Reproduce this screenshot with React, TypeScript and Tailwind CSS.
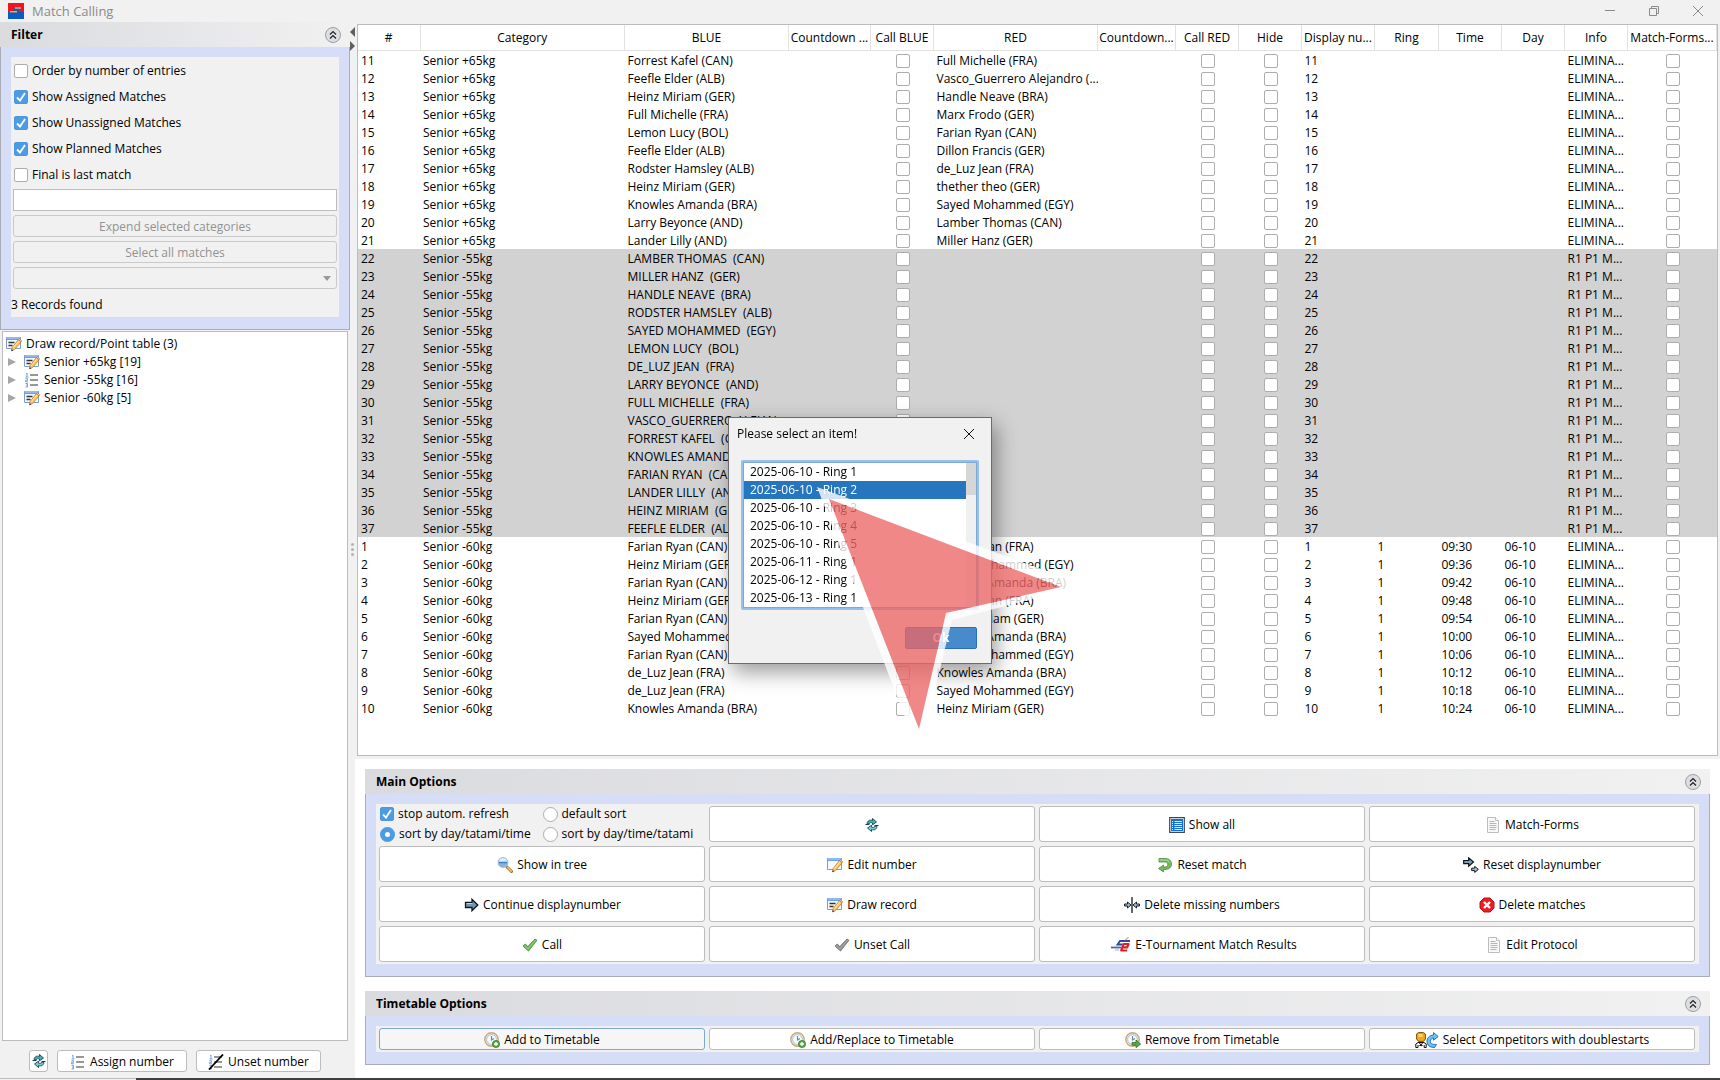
import type { ReactNode } from 'react'

type Match = {
      no: number
      category: string
      blue: string
      red?: string
      ring?: string
      time?: string
      day?: string
      info: string
}

const pairs65: [string, string][] = [
      ['Forrest Kafel (CAN)', 'Full Michelle (FRA)'],
      ['Feefle Elder (ALB)', 'Vasco_Guerrero Alejandro (...'],
      ['Heinz Miriam (GER)', 'Handle Neave (BRA)'],
      ['Full Michelle (FRA)', 'Marx Frodo (GER)'],
      ['Lemon Lucy (BOL)', 'Farian Ryan (CAN)'],
      ['Feefle Elder (ALB)', 'Dillon Francis (GER)'],
      ['Rodster Hamsley (ALB)', 'de_Luz Jean (FRA)'],
      ['Heinz Miriam (GER)', 'thether theo (GER)'],
      ['Knowles Amanda (BRA)', 'Sayed Mohammed (EGY)'],
      ['Larry Beyonce (AND)', 'Lamber Thomas (CAN)'],
      ['Lander Lilly (AND)', 'Miller Hanz (GER)'],
]

const names55 = [
      'LAMBER THOMAS  (CAN)',
      'MILLER HANZ  (GER)',
      'HANDLE NEAVE  (BRA)',
      'RODSTER HAMSLEY  (ALB)',
      'SAYED MOHAMMED  (EGY)',
      'LEMON LUCY  (BOL)',
      'DE_LUZ JEAN  (FRA)',
      'LARRY BEYONCE  (AND)',
      'FULL MICHELLE  (FRA)',
      'VASCO_GUERRERO ALEJAN...',
      'FORREST KAFEL  (CAN)',
      'KNOWLES AMANDA  (BRA)',
      'FARIAN RYAN  (CAN)',
      'LANDER LILLY  (AND)',
      'HEINZ MIRIAM  (GER)',
      'FEEFLE ELDER  (ALB)',
]

const pairs60: [string, string, string][] = [
      ['Farian Ryan (CAN)', 'de_Luz Jean (FRA)', '09:30'],
      ['Heinz Miriam (GER)', 'Sayed Mohammed (EGY)', '09:36'],
      ['Farian Ryan (CAN)', 'Knowles Amanda (BRA)', '09:42'],
      ['Heinz Miriam (GER)', 'de_Luz Jean (FRA)', '09:48'],
      ['Farian Ryan (CAN)', 'Heinz Miriam (GER)', '09:54'],
      ['Sayed Mohammed (EGY)', 'Knowles Amanda (BRA)', '10:00'],
      ['Farian Ryan (CAN)', 'Sayed Mohammed (EGY)', '10:06'],
      ['de_Luz Jean (FRA)', 'Knowles Amanda (BRA)', '10:12'],
      ['de_Luz Jean (FRA)', 'Sayed Mohammed (EGY)', '10:18'],
      ['Knowles Amanda (BRA)', 'Heinz Miriam (GER)', '10:24'],
]

const matches: Match[] = [
      ...pairs65.map(([blue, red], i) => ({ no: 11 + i, category: 'Senior +65kg', blue, red, info: 'ELIMINA...' })),
      ...names55.map((blue, i) => ({ no: 22 + i, category: 'Senior -55kg', blue, info: 'R1 P1 M...' })),
      ...pairs60.map(([blue, red, time], i) => ({
            no: 1 + i,
            category: 'Senior -60kg',
            blue,
            red,
            ring: '1',
            time,
            day: '06-10',
            info: 'ELIMINA...',
      })),
]

const columns = [
      { label: '#', width: 'w-[62px]' },
      { label: 'Category', width: '' },
      { label: 'BLUE', width: 'w-[164px]' },
      { label: 'Countdown ...', width: 'w-[82px]' },
      { label: 'Call BLUE', width: 'w-[63px]' },
      { label: 'RED', width: 'w-[164px]' },
      { label: 'Countdown...', width: 'w-[78px]' },
      { label: 'Call RED', width: 'w-[63px]' },
      { label: 'Hide', width: 'w-[63px]' },
      { label: 'Display nu...', width: 'w-[73px]' },
      { label: 'Ring', width: 'w-[64px]' },
      { label: 'Time', width: 'w-[63px]' },
      { label: 'Day', width: 'w-[63px]' },
      { label: 'Info', width: 'w-[63px]' },
      { label: 'Match-Forms...', width: 'w-[89px]' },
]

const rings = [
      '2025-06-10 - Ring 1',
      '2025-06-10 - Ring 2',
      '2025-06-10 - Ring 3',
      '2025-06-10 - Ring 4',
      '2025-06-10 - Ring 5',
      '2025-06-11 - Ring 1',
      '2025-06-12 - Ring 1',
      '2025-06-13 - Ring 1',
]

/* ---------- icons ---------- */

const Icon = ({ children, wide }: { children: ReactNode; wide?: boolean }) => (
      <svg
            viewBox={wide ? '0 0 24 16' : '0 0 16 16'}
            className={wide ? 'h-4 w-6 shrink-0' : 'h-4 w-4 shrink-0'}
            fill="none"
            aria-hidden="true"
      >
            {children}
      </svg>
)

const Pencil = () => (
      <>
            <path d="M12.5 3.5 15 6l-6.500 7.500-3 1.500.5-3.300z" fill="#fbc766" stroke="#b97a2c" strokeWidth=".8" />
            <path d="m12.500 3.500 1-1 2.200 2.200L15 6z" fill="#f4b5a0" stroke="#b97a2c" strokeWidth=".6" />
            <path d="m5.500 15 .3-2 1.500 1.400z" fill="#4a3520" />
            <path d="m12.800 5-5.500 6.500" stroke="#ffe7b5" />
      </>
)

const EditIcon = ({ lines }: { lines?: boolean }) => (
      <Icon>
            <path d="M.5 1.500h14v11H.5z" fill="#f4f8ff" stroke="#7f9cc9" />
            <path d="M.5 1h14v3H.5z" fill="#6d9fe3" />
            <path d="M1 2h13" stroke="#b8d4fa" />
            {lines && <path d="M2.500 6.500h6M2.500 9.500h4" stroke="#333" strokeWidth="1.500" />}
            <Pencil />
      </Icon>
)

const NumberListIcon = ({ struck }: { struck?: boolean }) => (
      <Icon>
            <path
                  d="M2 2l1-.8V5M1.500 5h3M1.500 6.700h2v1.600h-2v1.500h2.500M1.500 11.500h2V15h-2M2 13.200h1.500"
                  stroke="#6fa5dc"
            />
            <path d="M6 3h8M6 8h8M6 13h8" stroke="#333" strokeWidth="1.200" />
            {struck && <path d="M1 15.500 15 .5" stroke="#000" strokeWidth="1.800" />}
      </Icon>
)

const RefreshIcon = () => (
      <Icon>
            <path d="M3 6.500C3.500 3.500 6 2.500 8.500 3.500V1.500l4 3.500-4 2.800V6C6.800 5.300 5.500 5.500 5 7z" fill="#4ba9b8" stroke="#0f4654" strokeWidth=".9" />
            <path d="M13 9.500c-.5 3-3 4-5.500 3v2l-4-3.500 4-2.800V10c1.700.7 3 .5 3.500-1z" fill="#7bcbd3" stroke="#0f4654" strokeWidth=".9" />
            <path d="M1.500 7.500h4M10.500 8.500h4" stroke="#0f4654" />
      </Icon>
)

const TableIcon = () => (
      <Icon>
            <path d="M.7.7h14.600v14.600H.7z" fill="#fff" stroke="#40474f" strokeWidth="1.200" />
            <path d="M2 2h12v12H2z" fill="#1470d8" />
            <path d="M5.500 4.500h7.500M5.500 6.500h7.500M5.500 8.500h7.500M5.500 10.500h7.500M5.500 12.500h7.500M3 4.500h1M3 6.500h1M3 8.500h1M3 10.500h1M3 12.500h1" stroke="#d3ecff" />
      </Icon>
)

const PageIcon = () => (
      <Icon>
            <path d="M2.500.5h8l3 3v12h-11z" fill="#f8f8f8" stroke="#bdbdbd" />
            <path d="M10.500.5v3h3" fill="#fff" stroke="#bdbdbd" />
            <path d="M4.500 4.500h5M4.500 6.500h7M4.500 8.500h7M4.500 10.500h7M4.500 12.500h6" stroke="#b4b4b4" />
      </Icon>
)

const SearchIcon = () => (
      <Icon>
            <path d="m10 10 4.500 4.500" stroke="#9a6b1e" strokeWidth="3" strokeLinecap="round" />
            <path d="m10.500 10.300 3.800 4" stroke="#f6c766" strokeWidth="1.500" strokeLinecap="round" />
            <circle cx="6" cy="5.500" r="4.800" fill="#7db4ec" stroke="#a9b7ca" strokeWidth="1.200" />
            <path d="M2 5a4 4 0 0 1 8 0z" fill="#dcecfc" />
            <path d="M2 5.500h8" stroke="#3c7ed0" strokeWidth="1.500" />
      </Icon>
)

const ArrowIcon = () => (
      <Icon>
            <path d="M2.500 5.500H9V2.200L14.800 8 9 13.800v-3.300H2.500z" fill="#7396b0" stroke="#0c151d" strokeWidth="1.300" />
            <path d="M3.500 6.500h6" stroke="#bdd2e2" />
      </Icon>
)

const TwoArrowsIcon = () => (
      <Icon>
            <path d="M.7 3.500h5V.9L10.500 5 5.700 9.200V6.700h-5z" fill="#7f9fb8" stroke="#0c151d" strokeWidth="1.200" />
            <path d="M8.700 11.200h3V9.400l3.700 3-3.700 3v-1.800h-3z" fill="#9dc0dc" stroke="#0c151d" />
      </Icon>
)

const CollapseArrowsIcon = () => (
      <Icon>
            <path d="M.5 7h3V5L7 8l-3.500 3V9h-3zM15.500 7h-3V5L9 8l3.500 3V9h3z" fill="#9db8cc" stroke="#16212b" />
            <path d="M8 0v16" stroke="#000" strokeWidth="1.200" />
      </Icon>
)

const CheckIcon = ({ gray }: { gray?: boolean }) => (
      <Icon>
            <path
                  d="M1 9.200 3.300 7l2.500 2.600L13 2l2 1.300L6.500 14z"
                  fill={gray ? '#8f8f8f' : '#6dba5c'}
                  stroke={gray ? '#6c6c6c' : '#3f8636'}
                  strokeWidth=".8"
            />
            <path d="M2.200 9 6 12l7.500-9" stroke={gray ? '#b5b5b5' : '#9bd88b'} strokeWidth=".8" />
      </Icon>
)

const UndoIcon = () => (
      <Icon>
            <path
                  d="M2 1.500h6c4 0 6.500 2.200 6.500 5.500S12 12.500 8 12.500H6.500V15L1.500 11.500l5-3.500v2H8c1.800 0 2.800-1 2.800-2.800S9.800 5 8 5H2z"
                  fill="#77b866"
                  stroke="#4d8b40"
                  strokeWidth=".8"
            />
            <path d="M2.500 3h6c2 0 3.500 1 4 2.500" stroke="#b4e0a6" />
      </Icon>
)

const DeleteIcon = () => (
      <Icon>
            <path d="M5 1h6l4 4v6l-4 4H5l-4-4V5z" fill="#ef1c22" stroke="#c10f14" />
            <path d="m5 5 6 6M11 5l-6 6" stroke="#fff" strokeWidth="2.400" />
      </Icon>
)

const TournamentIcon = () => (
      <Icon wide>
            <path d="M23 4H13l-2.500 3.500h5" stroke="#2b4c9b" strokeWidth="1.800" />
            <path d="M4 10.500h10" stroke="#4a68ac" strokeWidth="1.800" />
            <path d="M8 13h4" stroke="#9fb0d4" />
            <path d="m21.500 0-3.500 3.500" stroke="#d0606a" />
            <path
                  d="M14.500 10.300h5.700l1.300-3.300h-5l-2.300 6.500h6"
                  stroke="#dc1f2b"
                  strokeWidth="2.200"
                  strokeLinejoin="round"
            />
      </Icon>
)

const ClockIcon = ({ remove }: { remove?: boolean }) => (
      <Icon>
            <circle cx="7.500" cy="7.500" r="6.700" fill="#e9f1f8" stroke="#cfa774" strokeWidth="1.400" />
            <circle cx="7.500" cy="7.500" r="4.900" fill="#f7fbff" stroke="#a9bfd2" />
            <path d="M7.500 4v4l2.500-1.500" stroke="#6d88a3" strokeWidth="1.200" />
            {remove ? (
                  <path d="M7 10.500h4V8l4.700 4-4.700 3.700v-2.500H7z" fill="#57a845" stroke="#2f7524" strokeWidth=".8" />
            ) : (
                  <>
                        <circle cx="12" cy="12" r="3.600" fill="#57a845" stroke="#2f7524" strokeWidth=".7" />
                        <path d="M12 10v4M10 12h4" stroke="#fff" strokeWidth="1.300" />
                  </>
            )}
      </Icon>
)

const CompetitorIcon = () => (
      <Icon wide>
            <path d="M3.500.6h5L10.400 2v5L8.500 9.400h-5L1.600 7V2z" fill="#f3a81a" stroke="#7d4e08" />
            <path d="M3.500 2h4v3h-4z" fill="#ffd968" />
            <path d="M.8 15.500V12l2.200-1.500h6l2.200 1.500v3.500h-2V13M3 13v2.500H.8" fill="#fff" stroke="#111" />
            <path d="m4 10.500 2 2.500 2-2.500M4.500 13.500h3" stroke="#111" />
            <path
                  d="M18.500 3V.6l4.700 3.900-4.700 3.700V6c-2 .3-3.200 1.500-3.200 3.200 0 2 1.500 3.200 4 3.200h2.200l-1.700 3c-5 .3-7.800-2.200-7.800-6 0-3.700 2.500-6 6.500-6.400z"
                  fill="#6fc0f5"
                  stroke="#1769b5"
                  strokeWidth=".9"
            />
      </Icon>
)

const AppIcon = () => (
      <Icon>
            <path d="M0 0h16v9H0z" fill="#f5121d" />
            <path d="M0 9h16v7H0z" fill="#0a5bc4" />
            <path d="M1 9.500h8.500l1-2.200H6l1-2h6.500" stroke="#44526b" strokeWidth="1.600" />
            <path d="M2 8.800h7M7 5h6" stroke="#e5e9ef" />
      </Icon>
)

/* ---------- controls ---------- */

const Box = ({ label }: { label: string }) => (
      <input
            type="checkbox"
            aria-label={label}
            className="mx-auto block h-3.5 w-3.5 appearance-none rounded-[2px] border border-[#adadad] bg-white"
      />
)

const CheckField = ({ id, label, checked }: { id: string; label: string; checked?: boolean }) => (
      <div className="flex items-center gap-1">
            <span className="relative h-3.5 w-3.5 shrink-0">
                  <input
                        id={id}
                        type="checkbox"
                        defaultChecked={checked}
                        className="peer block h-3.5 w-3.5 appearance-none rounded-[2px] border border-[#adadad] bg-white checked:border-[#4a97e0] checked:bg-[#4c9be5]"
                  />
                  <svg
                        viewBox="0 0 14 14"
                        className="pointer-events-none absolute inset-0 hidden peer-checked:block"
                        fill="none"
                        aria-hidden="true"
                  >
                        <path d="m3 7.500 3 3 5-7.500" stroke="#fff" strokeWidth="1.800" />
                  </svg>
            </span>
            <label htmlFor={id}>{label}</label>
      </div>
)

const RadioField = ({ id, label, checked }: { id: string; label: string; checked?: boolean }) => (
      <div className="flex items-center gap-1">
            <input
                  id={id}
                  type="radio"
                  name="sort"
                  defaultChecked={checked}
                  className="block h-[15px] w-[15px] shrink-0 appearance-none rounded-full border border-[#adadad] bg-white checked:border-[5px] checked:border-[#4c9be5]"
            />
            <label htmlFor={id}>{label}</label>
      </div>
)

const ActionButton = ({ icon, label, height = 'h-9', active }: { icon: ReactNode; label?: string; height?: string; active?: boolean }) => (
      <button
            type="button"
            aria-label={label ?? 'Refresh'}
            className={`flex items-center justify-center gap-1 rounded-[3px] border pt-0.5 ${height} ${
                  active ? 'border-[#7da7d6] bg-[#f6f6f6]' : 'border-[#bcbcbc] bg-white'
            }`}
      >
            {icon}
            {label && <span>{label}</span>}
      </button>
)

const SectionHeader = ({ title }: { title: string }) => (
      <div className="flex h-[25px] items-center justify-between bg-linear-to-r from-[#dadbdf] to-[#f1f1f1] pr-[9px] pl-[11px]">
            <h2 className="font-bold">{title}</h2>
            <button
                  type="button"
                  aria-label={`Collapse ${title}`}
                  className="flex h-4 w-4 items-center justify-center rounded-full border border-[#9b9ea3] bg-[#dcdee2]"
            >
                  <svg viewBox="0 0 10 10" className="h-2.5 w-2.5" fill="none" stroke="#222" strokeWidth="1.200" aria-hidden="true">
                        <path d="M2 4.500 5 1.500l3 3M2 8.500l3-3 3 3" />
                  </svg>
            </button>
      </div>
)

/* ---------- areas ---------- */

const TitleBar = () => (
      <header className="flex h-[22px] shrink-0 items-center pr-[17px] pl-2">
            <AppIcon />
            <h1 className="pl-2 text-[13px] text-[#8a8a8a]">Match Calling</h1>
            <div className="ml-auto flex items-center gap-[34px] text-[#8a8a8a]">
                  <button type="button" aria-label="Minimize">
                        <svg viewBox="0 0 10 10" className="h-2.5 w-2.5" stroke="currentColor"><path d="M0 4.500h10" /></svg>
                  </button>
                  <button type="button" aria-label="Restore">
                        <svg viewBox="0 0 10 10" className="h-2.5 w-2.5" fill="none" stroke="currentColor">
                              <path d="M.5 2.500h7v7h-7zM2.500 2.500v-2h7v7h-2" />
                        </svg>
                  </button>
                  <button type="button" aria-label="Close">
                        <svg viewBox="0 0 10 10" className="h-2.5 w-2.5" stroke="currentColor"><path d="m0 0 10 10M10 0 0 10" /></svg>
                  </button>
            </div>
      </header>
)

const FilterPanel = () => (
      <section>
            <SectionHeader title="Filter" />
            <div className="border-r border-b border-l border-[#a9adb8] bg-[#d6ddf7] px-2.5 pt-2.5 pb-3">
                  <div className="flex flex-col bg-[#f1f1f1] px-0.5">
                        <div className="flex flex-col gap-2 px-px py-[5px] leading-[18px]">
                              <CheckField id="order" label="Order by number of entries" />
                              <CheckField id="assigned" label="Show Assigned Matches" checked />
                              <CheckField id="unassigned" label="Show Unassigned Matches" checked />
                              <CheckField id="planned" label="Show Planned Matches" checked />
                              <CheckField id="final" label="Final is last match" />
                        </div>
                        <div className="flex flex-col gap-1">
                              <input type="text" aria-label="Filter text" className="h-[22px] border border-[#bcbcbc] bg-white px-1" />
                              <button type="button" disabled className="h-[22px] rounded-[3px] border border-[#cacaca] pt-0.5 text-[#929292]">
                                    Expend selected categories
                              </button>
                              <button type="button" disabled className="h-[22px] rounded-[3px] border border-[#cacaca] pt-0.5 text-[#929292]">
                                    Select all matches
                              </button>
                              <div className="relative">
                                    <select
                                          disabled
                                          aria-label="Category"
                                          className="block h-[22px] w-full appearance-none rounded-[3px] border border-[#cacaca]"
                                    />
                                    <svg viewBox="0 0 8 5" className="absolute top-[9px] right-1.5 h-[5px] w-2" fill="#9a9a9a" aria-hidden="true">
                                          <path d="M0 0h8L4 5z" />
                                    </svg>
                              </div>
                        </div>
                        <p className="-ml-0.5 pt-2 pb-1 leading-4">3 Records found</p>
                  </div>
            </div>
      </section>
)

const TreeItem = ({ icon, label }: { icon: ReactNode; label: string }) => (
      <li className="flex h-[18px] items-center">
            <svg viewBox="0 0 8 8" className="mr-2 h-2 w-2" fill="#a6a6a6" aria-hidden="true"><path d="m0 0 8 4-8 4z" /></svg>
            {icon}
            <span className="pl-1">{label}</span>
      </li>
)

const CategoryTree = () => (
      <div className="mt-px mr-0.5 ml-0.5 flex-1 border border-[#bcbcbc] bg-white pt-[3px] pl-[3px]">
            <div className="flex h-[18px] items-center gap-1">
                  <EditIcon lines />
                  <span>Draw record/Point table (3)</span>
            </div>
            <ul className="pl-0.5">
                  <TreeItem icon={<EditIcon lines />} label="Senior +65kg [19]" />
                  <TreeItem icon={<NumberListIcon />} label="Senior -55kg [16]" />
                  <TreeItem icon={<EditIcon lines />} label="Senior -60kg [5]" />
            </ul>
      </div>
)

const Sidebar = () => (
      <aside className="flex w-[350px] shrink-0 flex-col">
            <FilterPanel />
            <CategoryTree />
            <div className="flex h-[37px] items-center gap-[9px] pt-0.5 pl-[29px]">
                  <button type="button" aria-label="Refresh" className="flex h-[22px] w-[19px] items-center justify-center rounded-[3px] border border-[#bcbcbc] bg-white">
                        <RefreshIcon />
                  </button>
                  <button type="button" className="flex h-[22px] w-[130px] items-center justify-center gap-1 rounded-[3px] border border-[#bcbcbc] bg-white pt-0.5">
                        <NumberListIcon />
                        Assign number
                  </button>
                  <button type="button" className="flex h-[22px] w-[125px] items-center justify-center gap-1 rounded-[3px] border border-[#bcbcbc] bg-white pt-0.5">
                        <NumberListIcon struck />
                        Unset number
                  </button>
            </div>
      </aside>
)

const Splitter = () => (
      <div className="flex w-[5px] shrink-0 flex-col items-center pt-[5px] pb-[30px]">
            <svg viewBox="0 0 5 10" className="h-2.5 w-[5px]" fill="#5f5f5f" aria-hidden="true"><path d="M5 0v10L0 5z" /></svg>
            <svg viewBox="0 0 5 10" className="mt-1 h-2.5 w-[5px]" fill="#5f5f5f" aria-hidden="true"><path d="M0 0v10l5-5z" /></svg>
            <div className="flex flex-1 flex-col items-center justify-center gap-0.5">
                  <span className="h-[3px] w-[3px] rounded-full bg-[#b3b3b3]" />
                  <span className="h-[3px] w-[3px] rounded-full bg-[#b3b3b3]" />
                  <span className="h-[3px] w-[3px] rounded-full bg-[#b3b3b3]" />
            </div>
      </div>
)

const textCell = 'overflow-hidden p-0 pt-0.5 pl-[3px]'
const boxCell = 'p-0 pt-0.5 pl-0.5'

const MatchTable = () => (
      <div className="bg-[#f1f1f1] flex flex-1 flex-col px-0.5 pt-0.5 pb-[3px]">
            <div className="flex-1 border border-[#bcbcbc] bg-white">
                  <table className="w-full table-fixed border-collapse whitespace-pre">
                        <colgroup>
                              {columns.map((c, i) => (
                                    <col key={i} className={c.width} />
                              ))}
                        </colgroup>
                        <thead>
                              <tr className="h-[25px]">
                                    {columns.map((c, i) => (
                                          <th key={i} className="overflow-hidden border-r border-b border-[#e2e2e2] p-0 pt-0.5 text-center font-normal">
                                                {c.label}
                                          </th>
                                    ))}
                              </tr>
                        </thead>
                        <tbody>
                              {matches.map((m) => (
                                    <tr key={m.no} className={m.red ? 'h-[18px]' : 'h-[18px] bg-[#d2d2d2]'}>
                                          <td className={textCell}>{m.no}</td>
                                          <td className={textCell}>{m.category}</td>
                                          <td className={textCell}>{m.blue}</td>
                                          <td className="p-0" />
                                          <td className={boxCell}><Box label={`Call blue ${m.no}`} /></td>
                                          <td className={textCell}>{m.red}</td>
                                          <td className="p-0" />
                                          <td className={boxCell}><Box label={`Call red ${m.no}`} /></td>
                                          <td className={boxCell}><Box label={`Hide ${m.no}`} /></td>
                                          <td className={textCell}>{m.no}</td>
                                          <td className={textCell}>{m.ring}</td>
                                          <td className={textCell}>{m.time}</td>
                                          <td className={textCell}>{m.day}</td>
                                          <td className={textCell}>{m.info}</td>
                                          <td className={boxCell}><Box label={`Match form ${m.no}`} /></td>
                                    </tr>
                              ))}
                        </tbody>
                  </table>
            </div>
      </div>
)

const Panel = ({ title, children }: { title: string; children: ReactNode }) => (
      <section>
            <SectionHeader title={title} />
            <div className="border-r border-b border-l border-[#a9adb8] bg-[#d6ddf7] px-2.5 pt-2.5 pb-3">
                  <div className="grid grid-cols-4 gap-1 bg-[#f1f1f1] py-0.5 pr-1 pl-[3px]">{children}</div>
            </div>
      </section>
)

const MainOptions = () => (
      <Panel title="Main Options">
            <div className="grid h-9 grid-cols-2 gap-y-1 pl-px">
                  <CheckField id="stop" label="stop autom. refresh" checked />
                  <RadioField id="sort-default" label="default sort" />
                  <RadioField id="sort-tatami" label="sort by day/tatami/time" checked />
                  <RadioField id="sort-time" label="sort by day/time/tatami" />
            </div>
            <ActionButton icon={<RefreshIcon />} />
            <ActionButton icon={<TableIcon />} label="Show all" />
            <ActionButton icon={<PageIcon />} label="Match-Forms" />
            <ActionButton icon={<SearchIcon />} label="Show in tree" />
            <ActionButton icon={<EditIcon />} label="Edit number" />
            <ActionButton icon={<UndoIcon />} label="Reset match" />
            <ActionButton icon={<TwoArrowsIcon />} label="Reset displaynumber" />
            <ActionButton icon={<ArrowIcon />} label="Continue displaynumber" />
            <ActionButton icon={<EditIcon lines />} label="Draw record" />
            <ActionButton icon={<CollapseArrowsIcon />} label="Delete missing numbers" />
            <ActionButton icon={<DeleteIcon />} label="Delete matches" />
            <ActionButton icon={<CheckIcon />} label="Call" />
            <ActionButton icon={<CheckIcon gray />} label="Unset Call" />
            <ActionButton icon={<TournamentIcon />} label="E-Tournament Match Results" />
            <ActionButton icon={<PageIcon />} label="Edit Protocol" />
      </Panel>
)

const TimetableOptions = () => (
      <Panel title="Timetable Options">
            <ActionButton height="h-[22px]" icon={<ClockIcon />} label="Add to Timetable" active />
            <ActionButton height="h-[22px]" icon={<ClockIcon />} label="Add/Replace to Timetable" />
            <ActionButton height="h-[22px]" icon={<ClockIcon remove />} label="Remove from Timetable" />
            <ActionButton height="h-[22px]" icon={<CompetitorIcon />} label="Select Competitors with doublestarts" />
      </Panel>
)

const RingDialog = () => (
      <div className="fixed inset-0 flex items-center justify-center">
            <div
                  role="dialog"
                  aria-label="Please select an item!"
                  className="relative w-[264px] border border-[#6b6b6b] bg-[#f1f1f1] pb-3.5 shadow-[4px_8px_20px_rgba(0,0,0,0.4)]"
            >
                  <div className="flex h-8 items-center justify-between pr-[17px] pl-2">
                        <h2>Please select an item!</h2>
                        <button type="button" aria-label="Close dialog">
                              <svg viewBox="0 0 10 10" className="h-2.5 w-2.5" stroke="#111" aria-hidden="true"><path d="m0 0 10 10M10 0 0 10" /></svg>
                        </button>
                  </div>
                  <div className="mx-3 mt-2.5 flex rounded-[2px] border-2 border-[#93c0ec] bg-white">
                        <ul role="listbox" aria-label="Rings" className="flex-1 border border-r-0 border-[#7fa9d3]">
                              {rings.map((ring, i) => (
                                    <li
                                          key={ring}
                                          role="option"
                                          aria-selected={i === 1}
                                          className={i === 1 ? 'h-[18px] bg-[#2675bf] pl-1.5 leading-[18px] text-white' : 'h-[18px] pl-1.5 leading-[18px]'}
                                    >
                                          {ring}
                                    </li>
                              ))}
                        </ul>
                        <div className="w-[11px] border border-l-0 border-[#7fa9d3] bg-[#f0f0f0]">
                              <div className="h-8 bg-[#d6d6d6]" />
                        </div>
                  </div>
                  <div className="mt-[17px] mr-3.5 flex justify-end">
                        <button type="button" className="h-[22px] w-[72px] rounded-[2px] border border-[#2c6cb3] bg-[#478bcc] font-bold text-white">
                              Ok
                        </button>
                  </div>
                  {/* pointer arrow over the dialog */}
                  <svg
                        viewBox="0 0 270 270"
                        className="pointer-events-none absolute top-[68px] left-[87px] h-[270px] w-[270px] max-w-none"
                        aria-hidden="true"
                  >
                        <path
                              d="M1 1 269 99 136 134 103 268zM13 13 103 243 130 127 245 101z"
                              fill="#fff"
                              fillOpacity=".8"
                              fillRule="evenodd"
                        />
                        <path d="M13 13 103 243 130 127 245 101z" fill="#ec6666" fillOpacity=".78" />
                  </svg>
            </div>
      </div>
)

export const App = () => {
      return (
            <div className="flex min-h-screen flex-col bg-[#f1f1f1] font-['Open_Sans','Noto_Sans',sans-serif] text-[12px] leading-4 text-black">
                  <TitleBar />
                  <div className="flex flex-1">
                        <Sidebar />
                        <Splitter />
                        <main className="flex min-w-0 flex-1 flex-col">
                              <MatchTable />
                              <div className="flex flex-col gap-3.5 bg-white px-2.5 pt-2.5 pb-[13px]">
                                    <MainOptions />
                                    <TimetableOptions />
                              </div>
                        </main>
                  </div>
                  <div className="flex h-0.5">
                        <div className="w-[136px] border-t border-[#bcbcbc] bg-[#f1f1f1]" />
                        <div className="flex-1 bg-[#404040]" />
                  </div>
                  <RingDialog />
            </div>
      )
}

export default App
